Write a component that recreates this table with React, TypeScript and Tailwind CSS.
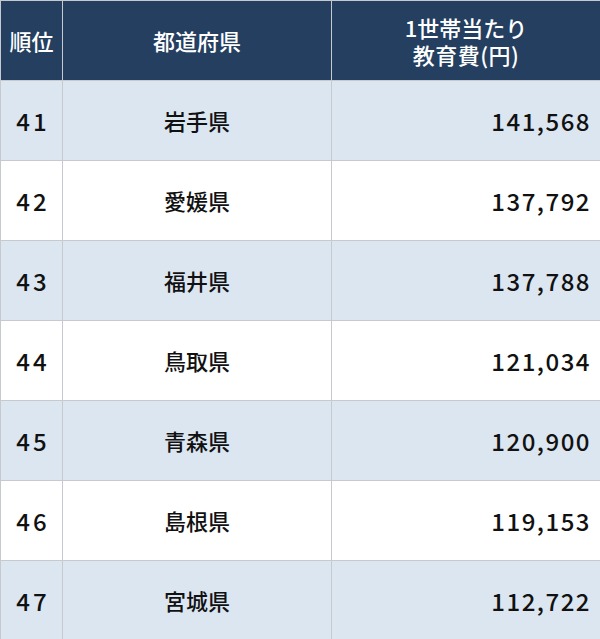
import React from 'react';

const rows = [
  { rank: 41, pref: '岩手県', cost: '141,568' },
  { rank: 42, pref: '愛媛県', cost: '137,792' },
  { rank: 43, pref: '福井県', cost: '137,788' },
  { rank: 44, pref: '鳥取県', cost: '121,034' },
  { rank: 45, pref: '青森県', cost: '120,900' },
  { rank: 46, pref: '島根県', cost: '119,153' },
  { rank: 47, pref: '宮城県', cost: '112,722' },
];

const font = { fontFamily: '"Noto Sans CJK JP", "Noto Sans", sans-serif' };

export default function App() {
  return (
    <div className="w-[600px] h-[639px] overflow-hidden bg-white" style={font}>
      <table className="w-[600px] table-fixed border-collapse">
        <colgroup>
          <col className="w-[62px]" />
          <col className="w-[269px]" />
          <col className="w-[269px]" />
        </colgroup>
        <thead>
          <tr className="h-[80px] bg-[#243f60] text-white text-[22px]">
            <th className="border border-[#c6c9cd] font-medium text-center">順位</th>
            <th className="border border-[#c6c9cd] font-medium text-center">都道府県</th>
            <th className="border border-[#c6c9cd] font-medium text-center leading-[27px]">
              <div>1世帯当たり</div>
              <div className="tracking-[0.5px]">教育費(円)</div>
            </th>
          </tr>
        </thead>
        <tbody>
          {rows.map((r, i) => (
            <tr
              key={r.rank}
              className={`h-[80px] text-[#111111] ${i % 2 === 0 ? 'bg-[#dce6f1]' : 'bg-white'}`}
            >
              <td className="border border-[#c6c9cd] text-center text-[24px] font-medium tracking-[3px] pl-[3px]">{r.rank}</td>
              <td className="border border-[#c6c9cd] text-center text-[22px] font-medium">{r.pref}</td>
              <td className="border border-[#c6c9cd] text-right pr-[9px] text-[24px] font-medium tracking-[1.5px]">{r.cost}</td>
            </tr>
          ))}
        </tbody>
      </table>
    </div>
  );
}
